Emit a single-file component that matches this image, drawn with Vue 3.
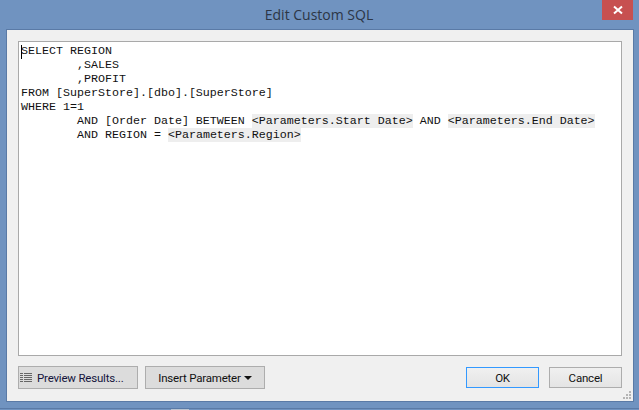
<script setup>
const head = `SELECT REGION
        ,SALES
        ,PROFIT
FROM [SuperStore].[dbo].[SuperStore]
WHERE 1=1
        AND [Order Date] BETWEEN `
</script>

<template>
  <div class="window">
    <header class="titlebar">
      <h1 class="title">Edit Custom SQL</h1>
      <button class="close" aria-label="Close">
        <svg width="10" height="10" viewBox="0 0 10 10"><path d="M1 1.5 L9 8.5 M9 1.5 L1 8.5" stroke="#fff" stroke-width="2" fill="none"/></svg>
      </button>
    </header>
    <main class="client">
      <div class="editor">
        <span class="caret"></span>
        <pre class="code">{{ head }}<span class="param">&lt;Parameters.Start Date&gt;</span> AND <span class="param">&lt;Parameters.End Date&gt;</span>
        AND REGION = <span class="param">&lt;Parameters.Region&gt;</span></pre>
      </div>
      <footer class="actions">
        <div class="group">
          <button class="btn tool preview">
            <svg width="13" height="9" viewBox="0 0 13 9" class="grid-icon">
              <path d="M0 .5h3M4 .5h8M0 2.5h3M4 2.5h8M0 4.5h3M4 4.5h8M0 6.5h3M4 6.5h8M0 8.5h3M4 8.5h8" stroke="#666" stroke-width="1" fill="none"/>
            </svg>
            Preview Results...
          </button>
          <button class="btn tool insert">Insert Parameter <span class="arrow"></span></button>
        </div>
        <div class="group right">
          <button class="btn dlg ok">OK</button>
          <button class="btn dlg">Cancel</button>
        </div>
      </footer>
      <svg class="grip" width="9" height="9" viewBox="0 0 9 9">
        <path d="M6 0h2v2H6zM3 3h2v2H3zM6 3h2v2H6zM0 6h2v2H0zM3 6h2v2H3zM6 6h2v2H6z" fill="#b4b4b4"/>
      </svg>
    </main>
    <div class="edge"></div>
    <div class="sliver"></div>
  </div>
</template>

<style>
html, body { margin: 0; background: #7093c0; }
</style>

<style scoped>
.window {
  position: relative;
  width: 639px;
  height: 410px;
  background: #7093c0;
  box-sizing: border-box;
  padding: 0 5px 1px 6px;
  display: flex;
  flex-direction: column;
  font-family: "Open Sans", "Liberation Sans", sans-serif;
  overflow: hidden;
}
.titlebar {
  height: 29px;
  flex: none;
  position: relative;
  display: flex;
  justify-content: center;
  align-items: center;
}
.title {
  margin: 0;
  font-size: 14px;
  font-weight: 400;
  color: #2c3646;
  position: relative;
  left: -1px;
}
.close {
  position: absolute;
  right: 1px;
  top: 0;
  width: 31px;
  height: 20px;
  background: #c75050;
  border: 0;
  padding: 0;
  display: flex;
  align-items: center;
  justify-content: center;
}
.client {
  flex: 1;
  position: relative;
  background: #f0f0f0;
  border: 1px solid #5a7aa6;
  display: flex;
  flex-direction: column;
  padding: 11px 11px 12px 11px;
  min-height: 0;
}
.edge {
  flex: none;
  height: 1px;
  margin: 6px -5px 0 -6px;
  background: #5a7aa6;
}
.sliver {
  position: absolute;
  left: 171px;
  bottom: 0;
  width: 18px;
  height: 1px;
  background: #b9c4d2;
}
.editor {
  flex: 1;
  position: relative;
  background: #fff;
  border: 1px solid #a9a9a9;
  padding: 2px 2px;
  min-height: 0;
}
.caret {
  position: absolute;
  left: 2px;
  top: 3px;
  width: 1px;
  height: 14px;
  background: #000;
}
.code {
  margin: 0;
  font-family: "Liberation Mono", "Courier New", monospace;
  font-size: 11.67px;
  line-height: 14px;
  color: #111;
}
.param { background: #eeeeee; }
.actions {
  flex: none;
  display: flex;
  justify-content: space-between;
  margin-top: 10px;
  height: 23px;
}
.group { display: flex; gap: 7px; align-items: flex-start; }
.group.right { gap: 10px; align-items: center; }
.btn {
  box-sizing: border-box;
  font-family: Roboto, "Open Sans", sans-serif;
  font-size: 11.5px;
  letter-spacing: -0.2px;
  color: #111;
  border: 1px solid #adadad;
  padding: 0;
  background: #dcdcdc;
}
.tool {
  width: 120px;
  height: 23px;
  display: flex;
  align-items: center;
  justify-content: center;
}
.preview { justify-content: flex-start; padding-left: 1px; color: #14143c; gap: 4px; }
.grid-icon { flex: none; }
.arrow {
  display: inline-block;
  width: 0;
  height: 0;
  margin-left: 3px;
  margin-top: 1px;
  border-left: 4px solid transparent;
  border-right: 4px solid transparent;
  border-top: 4px solid #111;
}
.dlg {
  width: 73px;
  height: 21px;
  background: linear-gradient(#f0f0f0, #e4e4e4);
}
.ok { border-color: #3399ff; }
.grip {
  position: absolute;
  right: 1px;
  bottom: 1px;
}
</style>
